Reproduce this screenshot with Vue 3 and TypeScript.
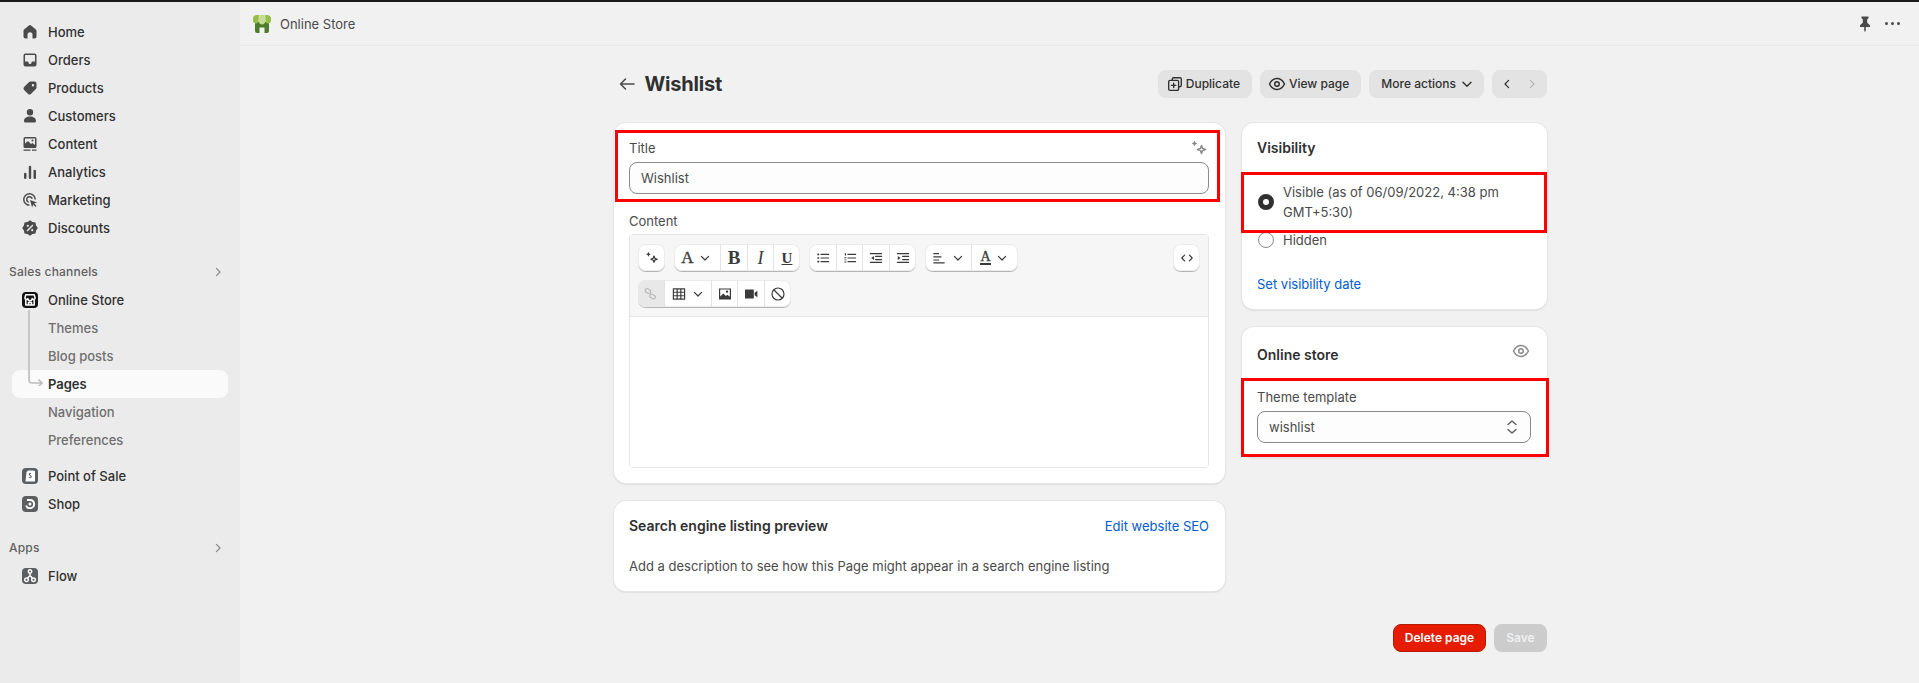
<script setup lang="ts">
import { h } from 'vue'

type IconDef = { d?: string; line?: string }

const icons: Record<string, IconDef> = {
  home: { d: 'M8.9 3.4a1.7 1.7 0 0 1 2.2 0l4.5 3.8c.6.5.9 1.2.9 1.9v5.4a2 2 0 0 1-2 2h-2v-3.7a2.5 2.5 0 0 0-5 0v3.7h-2a2 2 0 0 1-2-2V9.1c0-.7.3-1.4.9-1.9z' },
  orders: { d: 'M5.5 3.5h9a2 2 0 0 1 2 2v9a2 2 0 0 1-2 2h-9a2 2 0 0 1-2-2v-9a2 2 0 0 1 2-2zM5 5.5v6h2.5a1 1 0 0 1 1 1 1.5 1.5 0 0 0 3 0 1 1 0 0 1 1-1H15v-6a.5.5 0 0 0-.5-.5h-9a.5.5 0 0 0-.5.5z' },
  products: { d: 'M10.5 3.5h4a2 2 0 0 1 2 2v4a2 2 0 0 1-.6 1.4l-5 5a2 2 0 0 1-2.8 0l-4-4a2 2 0 0 1 0-2.8l5-5a2 2 0 0 1 1.4-.6zM13 6a1.2 1.2 0 1 0 0 2.4A1.2 1.2 0 0 0 13 6z' },
  customers: { d: 'M10 3a3.2 3.2 0 1 1 0 6.4A3.2 3.2 0 0 1 10 3zM4 15c0-2.8 2.6-4.5 6-4.5s6 1.7 6 4.5c0 .8-.6 1.5-1.5 1.5h-9C4.6 16.5 4 15.8 4 15z' },
  content: { d: 'M5 3h10a1.5 1.5 0 0 1 1.5 1.5v8A1.5 1.5 0 0 1 15 14H5a1.5 1.5 0 0 1-1.500-1.500v-8A1.500 1.500 0 0 1 5 3zM5 4.500v5l3-2.500 3 3 1.500-1 2.500 2V4.500zM12.500 5.500a1 1 0 1 1 0 2 1 1 0 0 1 0-2zM3.500 15.500h7v1.200h-7zM12 15.500h4.500v1.200H12z' },
  analytics: { d: 'M4 12a1.200 1.200 0 0 1 2.500 0v3.800a1.200 1.200 0 0 1-2.500 0zM8.800 5a1.200 1.200 0 0 1 2.400 0v10.800a1.200 1.200 0 0 1-2.400 0zM13.500 9a1.200 1.200 0 0 1 2.500 0v6.800a1.200 1.200 0 0 1-2.500 0z' },
  marketing: { d: 'M9.500 3a6.500 6.500 0 0 1 6.500 6.500h-1.500a5 5 0 1 0-5 5V16A6.500 6.500 0 0 1 9.500 3zM9.500 6a3.500 3.500 0 0 1 3.400 2.700h-1.600a2 2 0 1 0-2.600 2.600v1.600A3.500 3.500 0 0 1 9.500 6zM10 10l7 2.500-2.800 1.100 2.300 2.300-1 1-2.300-2.300-1.100 2.800z' },
  discounts: { d: 'M10 2.200l2.530 1.700 2.970.6.6 2.970 1.700 2.530-1.700 2.530-.6 2.970-2.970.6L10 17.800l-2.530-1.700-2.970-.6-.6-2.970L2.200 10l1.700-2.530.6-2.970 2.970-.6zM7.800 6.700a1.100 1.100 0 1 0 0 2.200 1.100 1.100 0 0 0 0-2.200zM12.200 11.100a1.100 1.100 0 1 0 0 2.200 1.100 1.100 0 0 0 0-2.200zM12.400 6.600l1 1-5.800 5.800-1-1z' },
  store: { line: 'M3.800 2.800h8.400l.9 3.200a1.500 1.500 0 0 1-2.900.5 2.200 2.200 0 0 1-4.400 0A1.500 1.500 0 0 1 2.900 6zM3.800 8.500V13h8.400V8.500M6.500 13v-2.500h3V13' },
  pos: { d: 'M6 2.500h4.500l2.500.6V13.500H3.500L4.500 4zM9 5.200c-.9-.3-2.200 0-2.200 1.200 0 1.400 1.900 1.300 1.900 2.300 0 .6-.8.7-1.600.3l-.3 1c1.300.6 3 .2 3-1.400 0-1.400-1.800-1.300-1.800-2.200 0-.4.5-.5 1-.2z' },
  shop: { d: 'M8 3a5 5 0 1 1-4.800 6.400h2A3.100 3.100 0 1 0 8 5H5V3zM8 6.500a1.500 1.500 0 1 1 0 3 1.500 1.500 0 0 1 0-3z' },
  flow: { line: 'M8 5.500v2.500M7 8.500L5.500 10.500M9 8.500l1.500 2M8 1.800a1.700 1.700 0 1 1 0 3.400 1.700 1.700 0 0 1 0-3.400zM4.500 10a1.800 1.800 0 1 1 0 3.600 1.800 1.800 0 0 1 0-3.600zM11.500 10a1.800 1.800 0 1 1 0 3.600 1.800 1.800 0 0 1 0-3.600z' },
  chevRight: { line: 'M8 5.500l4.500 4.500L8 14.500' },
  chevLeft: { line: 'M12 5.500L7.500 10l4.500 4.500' },
  chevDown: { line: 'M5.500 8l4.500 4.500L14.500 8' },
  updown: { line: 'M6 7.500l4-3.500 4 3.500M6 12.500l4 3.500 4-3.500' },
  back: { line: 'M17 10H3.500M8.500 5l-5 5 5 5' },
  duplicate: { line: 'M7 5V4.500A1.500 1.500 0 0 1 8.500 3h7A1.500 1.500 0 0 1 17 4.500v7a1.500 1.500 0 0 1-1.500 1.500H15M4.500 6h8A1.500 1.500 0 0 1 14 7.500v8a1.500 1.500 0 0 1-1.500 1.500h-8A1.500 1.500 0 0 1 3 15.500v-8A1.500 1.500 0 0 1 4.500 6zM8.500 9v5M6 11.500h5' },
  eye: { line: 'M2.500 10c1.800-3.600 4.400-5.500 7.500-5.500s5.700 1.900 7.500 5.500c-1.800 3.600-4.400 5.500-7.500 5.500S4.300 13.600 2.500 10zM10 7.700a2.300 2.300 0 1 1 0 4.600 2.300 2.300 0 0 1 0-4.600z' },
  pin: { d: 'M6.500 2.500h7v1.800l-1.300.9v3.600l2.800 2.500v1.700h-4.200v3.500L10 18l-.8-1.500V13H5v-1.700l2.800-2.500V5.200l-1.300-.9z' },
  sparkle: { d: 'M5.500 2.500l1 1.900 1.900 1-1.900 1-1 1.900-1-1.900-1.900-1 1.900-1z', line: 'M12.500 7.500l1.100 2.900 2.900 1.100-2.900 1.100-1.100 2.900-1.100-2.900-2.900-1.100 2.900-1.100z' },
  bullets: { d: 'M3 4.500h2.200v2H3zM3 9h2.200v2H3zM3 13.500h2.200v2H3z', line: 'M7.500 5.500h9.500M7.500 10h9.500M7.500 14.500h9.500' },
  numbers: { d: 'M3.500 4h1.500v3H3.500zM3 9h2.500v1H3zM3 11h2.500v.8H3zM3 13.500h2.500v.8H3zM3 15.500h2.500v.8H3z', line: 'M7.500 5.500h9.500M7.500 10h9.500M7.500 14.500h9.500' },
  outdent: { d: 'M7.500 7.500v5L4 10z', line: 'M3 4.500h14M3 15.500h14M9.500 8h7.500M9.500 12h7.500' },
  indent: { d: 'M3.500 7.500v5L7 10z', line: 'M3 4.500h14M3 15.500h14M9.500 8h7.500M9.500 12h7.500' },
  alignLeft: { line: 'M3.500 4.500h6M3.500 8.500h9M3.500 12.500h6M3.500 16h13' },
  table: { line: 'M3 3.500h14v13H3zM3 7.800h14M3 12.200h14M7.700 3.500v13M12.300 3.500v13' },
  image: { d: 'M2.500 3h15v14h-15zM4 4.500v8.500l4-3.500 3 3 2-1.500 3 2.500V4.500zM12.500 5.500a1.500 1.500 0 1 1 0 3 1.500 1.500 0 0 1 0-3z' },
  video: { d: 'M2.500 4.500h11v11h-11zM14.500 8.500l3.500-2.500v8l-3.500-2.500z' },
  clear: { line: 'M10 2.500a7.500 7.500 0 1 1 0 15 7.500 7.500 0 0 1 0-15zM4.700 4.700l10.600 10.600' },
  link: { line: 'M6 3.500l2.500 1.500a2.300 2.300 0 1 1-2.300 4L4.200 7.800A2.300 2.300 0 1 1 6 3.500zM12 10.500l2.300 1.300a2.300 2.300 0 1 1-2.300 4l-2-1.200a2.300 2.300 0 1 1 2-4.100z' },
  code: { line: 'M7 6.500L3.500 10 7 13.500M13 6.500l3.500 3.500-3.500 3.500' },
}

const Ico = (p: { name: string }) => {
  const icon = icons[p.name]
  return h('svg', { viewBox: '0 0 20 20', class: 'ico', 'aria-hidden': 'true' }, [
    icon.d ? h('path', { d: icon.d, fill: 'currentColor', 'fill-rule': 'evenodd' }) : null,
    icon.line ? h('path', { d: icon.line, fill: 'none', stroke: 'currentColor', 'stroke-width': 1.5, 'stroke-linecap': 'round', 'stroke-linejoin': 'round' }) : null,
  ])
}

const mainNav = [
  { label: 'Home', icon: 'home' },
  { label: 'Orders', icon: 'orders' },
  { label: 'Products', icon: 'products' },
  { label: 'Customers', icon: 'customers' },
  { label: 'Content', icon: 'content' },
  { label: 'Analytics', icon: 'analytics' },
  { label: 'Marketing', icon: 'marketing' },
  { label: 'Discounts', icon: 'discounts' },
]

const storeLinks = ['Themes', 'Blog posts', 'Pages', 'Navigation', 'Preferences']
</script>

<template>
  <div class="shell">
    <aside class="sidebar">
      <a v-for="item in mainNav" :key="item.label" class="nav-row">
        <Ico :name="item.icon" class="nav-icon" />
        <span>{{ item.label }}</span>
      </a>

      <div class="section-head">
        <span>Sales channels</span>
        <Ico name="chevRight" class="section-chev" />
      </div>
      <a class="nav-row">
        <span class="tile tile-dark"><Ico name="store" /></span>
        <span>Online Store</span>
      </a>
      <div class="sub-list">
        <svg class="connector" viewBox="0 0 16 76" aria-hidden="true">
          <path d="M1 0v70a3 3 0 0 0 3 3h10M10.500 69.500L14 73l-3.500 3.500" />
        </svg>
        <a v-for="link in storeLinks" :key="link" class="sub-row" :class="{ 'is-active': link === 'Pages' }">{{ link }}</a>
      </div>
      <a class="nav-row channel-gap">
        <span class="tile"><Ico name="pos" /></span>
        <span>Point of Sale</span>
      </a>
      <a class="nav-row">
        <span class="tile"><Ico name="shop" /></span>
        <span>Shop</span>
      </a>

      <div class="section-head">
        <span>Apps</span>
        <Ico name="chevRight" class="section-chev" />
      </div>
      <a class="nav-row">
        <span class="tile"><Ico name="flow" /></span>
        <span>Flow</span>
      </a>
    </aside>

    <main class="main">
      <header class="topbar">
        <svg class="logo" viewBox="0 0 18 18" aria-hidden="true">
          <path fill="#4d7c2a" d="M2 7h14v9a2 2 0 0 1-2 2h-2.500v-5.500h-5V18H4a2 2 0 0 1-2-2z" />
          <path fill="#95bf47" d="M3.500 0H6L5.500 6.500A2.800 2.800 0 0 1 0 6V4a4 4 0 0 1 3.500-4zM12 0h2.500A4 4 0 0 1 18 4v2a2.800 2.800 0 0 1-5.500.5z" />
          <path fill="#c4dc8f" d="M6.500 0h5l.5 6.500a3 3 0 0 1-6 0z" />
        </svg>
        <span class="topbar-title">Online Store</span>
        <div class="topbar-tools">
          <Ico name="pin" class="pin" />
          <span class="dots"><i></i><i></i><i></i></span>
        </div>
      </header>

      <div class="page">
        <div class="page-head">
          <Ico name="back" class="back" />
          <h1>Wishlist</h1>
          <div class="page-actions">
            <button type="button" class="btn"><Ico name="duplicate" />Duplicate</button>
            <button type="button" class="btn"><Ico name="eye" class="btn-eye" />View page</button>
            <button type="button" class="btn btn-more">More actions<Ico name="chevDown" /></button>
            <div class="pager">
              <Ico name="chevLeft" />
              <Ico name="chevRight" class="pager-off" />
            </div>
          </div>
        </div>

        <div class="columns">
          <div class="col-left">
            <section class="card card-editor">
              <div class="field marked marked-title">
                <div class="label-row">
                  <label>Title</label>
                  <Ico name="sparkle" class="label-spark" />
                </div>
                <div class="input">Wishlist</div>
              </div>

              <label class="content-label">Content</label>
              <div class="editor">
                <div class="toolbar">
                  <div class="tb-row">
                    <div class="tb-group"><span class="tb-btn w27"><Ico name="sparkle" /></span></div>
                    <div class="tb-group">
                      <span class="tb-btn w46 serif-a">A<Ico name="chevDown" class="tb-chev" /></span>
                      <span class="tb-btn w27 glyph glyph-b">B</span>
                      <span class="tb-btn w26 glyph glyph-i">I</span>
                      <span class="tb-btn w27 glyph glyph-u">U</span>
                    </div>
                    <div class="tb-group">
                      <span class="tb-btn w27"><Ico name="bullets" /></span>
                      <span class="tb-btn w26"><Ico name="numbers" /></span>
                      <span class="tb-btn w27"><Ico name="outdent" /></span>
                      <span class="tb-btn w27"><Ico name="indent" /></span>
                    </div>
                    <div class="tb-group">
                      <span class="tb-btn w46"><Ico name="alignLeft" /><Ico name="chevDown" class="tb-chev" /></span>
                      <span class="tb-btn w47 serif-a"><span class="color-a">A</span><Ico name="chevDown" class="tb-chev" /></span>
                    </div>
                    <div class="tb-group tb-end"><span class="tb-btn w27"><Ico name="code" /></span></div>
                  </div>
                  <div class="tb-row">
                    <div class="tb-group">
                      <span class="tb-btn w26 is-disabled"><Ico name="link" /></span>
                      <span class="tb-btn w47"><Ico name="table" /><Ico name="chevDown" class="tb-chev" /></span>
                      <span class="tb-btn w26"><Ico name="image" /></span>
                      <span class="tb-btn w27"><Ico name="video" /></span>
                      <span class="tb-btn w27"><Ico name="clear" /></span>
                    </div>
                  </div>
                </div>
                <div class="editor-body"></div>
              </div>
            </section>

            <section class="card card-seo">
              <div class="seo-head">
                <h2>Search engine listing preview</h2>
                <a class="link">Edit website SEO</a>
              </div>
              <p>Add a description to see how this Page might appear in a search engine listing</p>
            </section>
          </div>

          <div class="col-right">
            <section class="card card-visibility">
              <h2>Visibility</h2>
              <div class="radio-row marked marked-radio">
                <span class="radio is-on"></span>
                <span>Visible (as of 06/09/2022, 4:38 pm<br />GMT+5:30)</span>
              </div>
              <div class="radio-row radio-hidden">
                <span class="radio"></span>
                <span>Hidden</span>
              </div>
              <a class="link date-link">Set visibility date</a>
            </section>

            <section class="card card-store">
              <div class="store-head">
                <h2>Online store</h2>
                <Ico name="eye" class="store-eye" />
              </div>
              <div class="field marked marked-theme">
                <label class="theme-label">Theme template</label>
                <div class="input select">
                  <span>wishlist</span>
                  <Ico name="updown" class="select-chev" />
                </div>
              </div>
            </section>
          </div>
        </div>

        <div class="page-foot">
          <button type="button" class="btn-danger">Delete page</button>
          <button type="button" class="btn-save">Save</button>
        </div>
      </div>
    </main>
  </div>
</template>

<style scoped>
.shell {
  display: flex;
  height: 100vh;
  box-sizing: border-box;
  border-top: 2px solid #1a1a1a;
  overflow: hidden;
  background: #f1f1f1;
  color: #303030;
  font-family: Inter, "Liberation Sans", sans-serif;
  font-size: 13px;
  line-height: 20px;
}

.ico {
  display: block;
  flex: none;
  width: 20px;
  height: 20px;
}

.sidebar {
  flex: none;
  box-sizing: border-box;
  width: 240px;
  padding-top: 16px;
  background: #ebebeb;
}

.nav-row {
  display: flex;
  align-items: center;
  gap: 8px;
  height: 28px;
  margin: 0 12px;
  padding-left: 8px;
  font-weight: 450;
}

.nav-icon {
  color: #4a4a4a;
}

.section-head {
  display: flex;
  align-items: center;
  justify-content: space-between;
  height: 28px;
  margin-top: 16px;
  padding: 0 14px 0 9px;
  color: #616161;
  font-size: 12px;
  font-weight: 550;
  letter-spacing: 0.2px;
}

.section-chev {
  width: 16px;
  height: 16px;
  color: #8a8a8a;
}

.tile {
  display: flex;
  flex: none;
  width: 16px;
  height: 16px;
  margin: 0 2px;
  border-radius: 4px;
  background: #5c5f62;
  color: #fff;
}

.tile-dark {
  background: #111;
}

/* tile art is drawn on a 16 unit grid */
.tile .ico {
  overflow: visible;
}

.sub-list {
  position: relative;
}

.connector {
  position: absolute;
  top: -4px;
  left: 28px;
  width: 16px;
  height: 76px;
  fill: none;
  stroke: #bdbdbd;
  stroke-width: 1.6;
}

.sub-row {
  display: block;
  height: 28px;
  margin: 0 12px;
  padding-left: 36px;
  border-radius: 8px;
  color: #6f6f6f;
  font-weight: 450;
  line-height: 28px;
}

.sub-row.is-active {
  background: #fafafa;
  color: #303030;
  font-weight: 600;
}

.channel-gap {
  margin-top: 8px;
}

.main {
  flex: 1;
  min-width: 0;
}

.topbar {
  display: flex;
  align-items: center;
  box-sizing: border-box;
  height: 44px;
  padding: 0 13px;
  border-bottom: 1px solid #e8e8e8;
}

.logo {
  width: 18px;
  height: 18px;
}

.topbar-title {
  margin-left: 9px;
  color: #4a4a4a;
}

.topbar-tools {
  display: flex;
  align-items: center;
  gap: 10px;
  margin-left: auto;
  color: #4a4a4a;
}

.dots {
  display: flex;
  gap: 2.5px;
  padding-right: 6px;
}

.dots i {
  width: 3.5px;
  height: 3.5px;
  border-radius: 50%;
  background: #4a4a4a;
}

.page {
  box-sizing: border-box;
  width: 935px;
  margin: 0 auto;
  padding: 24px 0 0 2px;
}

.page-head {
  display: flex;
  align-items: center;
  height: 28px;
  margin-bottom: 25px;
}

.back {
  margin-left: 2.5px;
  color: #4a4a4a;
}

.page-head h1 {
  margin: 0 0 0 8px;
  font-size: 20px;
  font-weight: 700;
  letter-spacing: -0.2px;
}

.page-actions {
  display: flex;
  gap: 8px;
  margin-left: auto;
}

.btn {
  display: flex;
  align-items: center;
  gap: 2px;
  height: 28px;
  padding: 0 12px 0 8px;
  border: 0;
  border-radius: 8px;
  background: #e3e3e3;
  color: #303030;
  font: 500 12px/20px Inter, "Liberation Sans", sans-serif;
}

.btn-more {
  padding: 0 8px 0 12px;
}

.btn .ico {
  width: 18px;
  height: 18px;
}

.btn .btn-eye {
  width: 20px;
  height: 20px;
  margin-left: -1px;
}

.pager {
  display: flex;
  align-items: center;
  justify-content: space-between;
  box-sizing: border-box;
  width: 55px;
  height: 28px;
  padding: 0 7px;
  border-radius: 8px;
  background: #e3e3e3;
}

.pager .ico {
  width: 16px;
  height: 16px;
}

.pager-off {
  color: #b5b5b5;
}

.columns {
  display: flex;
  gap: 17px;
  align-items: flex-start;
}

.col-left {
  display: flex;
  flex-direction: column;
  gap: 18px;
  width: 611px;
}

.col-right {
  display: flex;
  flex-direction: column;
  gap: 18px;
  width: 305px;
}

.card {
  box-sizing: border-box;
  padding: 15px 16px 15px 15px;
  border-radius: 12px;
  background: #fff;
  box-shadow: 0 0 0 1px #e6e6e6, 0 1px 2px rgba(0, 0, 0, 0.22);
}

.card h2 {
  margin: 0;
  font-size: 14px;
  font-weight: 600;
}

.marked {
  position: relative;
}

.marked::after {
  content: "";
  position: absolute;
  z-index: 1;
  border: 3px solid #f00;
  pointer-events: none;
}

.marked-title::after {
  inset: -8px -11px -8px -14px;
}

.marked-radio::after {
  inset: -10px -16px -11px -16px;
}

.marked-theme::after {
  inset: -9px -18px -14px -16px;
}

.label-row {
  display: flex;
  align-items: center;
  justify-content: space-between;
  height: 20px;
  margin-bottom: 4px;
  color: #4a4a4a;
}

.label-spark {
  color: #8a8a8a;
}

.input {
  box-sizing: border-box;
  height: 32px;
  padding: 5px 11px;
  border: 1px solid #8a8a8a;
  border-radius: 8px;
  background: #fdfdfd;
  color: #4a4a4a;
}

.content-label {
  display: block;
  margin: 17px 0 3px;
  color: #4a4a4a;
}

.editor {
  border: 1px solid #e3e3e3;
  border-radius: 4px;
}

.toolbar {
  display: flex;
  flex-direction: column;
  gap: 9px;
  padding: 9px 8px;
  border-bottom: 1px solid #e8e8e8;
  background: #f6f6f6;
}

.tb-row {
  display: flex;
  gap: 9px;
}

.tb-group {
  display: flex;
  height: 27px;
  border-radius: 8px;
  background: #fff;
  box-shadow: 0 0 0 1px #ececec inset, 0 1px 0 #b5b5b5;
  overflow: hidden;
}

.tb-end {
  margin-left: auto;
}

.tb-btn {
  display: flex;
  align-items: center;
  justify-content: center;
  box-sizing: border-box;
  border-left: 1px solid #e3e3e3;
  color: #3a3a3a;
}

.tb-btn:first-child {
  border-left: 0;
}

.tb-btn .ico {
  width: 16px;
  height: 16px;
}

.tb-btn .tb-chev {
  width: 16px;
  height: 16px;
  margin-left: 3px;
}

.w26 {
  width: 26px;
}

.w27 {
  width: 27px;
}

.w46 {
  width: 46px;
}

.w47 {
  width: 47px;
}

.glyph,
.serif-a {
  font-family: "Liberation Serif", serif;
  font-size: 17px;
  font-weight: 700;
}

.serif-a {
  font-weight: 400;
  -webkit-text-stroke: 0.3px #3a3a3a;
}

.glyph-b {
  font-size: 19px;
}

.glyph-i {
  font-style: italic;
  font-weight: 400;
  font-size: 18px;
}

.glyph-u {
  text-decoration: underline;
  font-size: 15px;
}

.color-a {
  border-bottom: 2px solid #3a3a3a;
  font-size: 14px;
  line-height: 13px;
}

.is-disabled {
  background: #e8e8e8;
  color: #b8b8b8;
}

.editor-body {
  height: 150px;
  background: #fff;
}

.seo-head {
  display: flex;
  justify-content: space-between;
}

.card-seo p {
  margin: 20px 0 0;
  color: #4a4a4a;
}

.link {
  color: #005bd3;
}

.card-visibility {
  height: 186px;
}

.radio-row {
  display: flex;
  align-items: center;
  gap: 9px;
  margin-top: 24px;
  color: #4a4a4a;
}

.radio-hidden {
  margin-top: 8px;
}

.radio {
  flex: none;
  box-sizing: border-box;
  width: 16px;
  height: 16px;
  margin-left: 1px;
  border: 1px solid #8a8a8a;
  border-radius: 50%;
  background: #fdfdfd;
}

.radio.is-on {
  border: 5px solid #303030;
  background: #fff;
}

.date-link {
  display: block;
  margin-top: 24px;
}

.store-head {
  display: flex;
  align-items: flex-start;
  justify-content: space-between;
  height: 20px;
  margin-top: 3px;
}

.store-eye {
  margin-top: -4px;
  color: #8a8a8a;
}

.card-store {
  height: 130px;
}

.card-store .field {
  margin-top: 22px;
}

.theme-label {
  display: block;
  margin-bottom: 4px;
  color: #4a4a4a;
}

.select {
  display: flex;
  align-items: center;
  justify-content: space-between;
  padding-right: 8px;
}

.select-chev {
  color: #616161;
}

.page-foot {
  display: flex;
  justify-content: flex-end;
  gap: 8px;
  margin-top: 33px;
}

.btn-danger,
.btn-save {
  height: 28px;
  border-radius: 8px;
  font: 600 12px/20px Inter, "Liberation Sans", sans-serif;
}

.btn-danger {
  width: 93px;
  border: 1px solid #b51a00;
  background: #e51c00;
  color: #fff;
}

.btn-save {
  width: 53px;
  border: 0;
  background: #cccccc;
  color: #f1f1f1;
}
</style>

<style>
html,
body {
  margin: 0;
  background: #f1f1f1;
}
</style>
